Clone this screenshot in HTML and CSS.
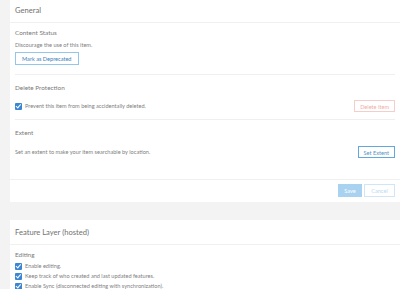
FILE: index.html
```html
<!DOCTYPE html>
<html>
  <head>
    <title>Item Settings</title>
    <link rel="stylesheet" href="styles.css">
  </head>

  <body>
    <div class="page">
      <div class="card">
        <div class="card-header">General</div>

        <div class="section status">
          <div class="section-title">Content Status</div>
          <div class="section-text">Discourage the use of this item.</div>
          <button class="btn btn-blue">Mark as Deprecated</button>
        </div>

        <div class="section protect">
          <div class="section-title">Delete Protection</div>
          <div class="row">
            <label class="check">
              <span class="box"></span>
              <span>Prevent this item from being accidentally deleted.</span>
            </label>
            <button class="btn btn-red">Delete Item</button>
          </div>
        </div>

        <div class="section extent">
          <div class="section-title">Extent</div>
          <div class="row">
            <span class="section-text">Set an extent to make your item searchable by location.</span>
            <button class="btn btn-dark-blue">Set Extent</button>
          </div>
        </div>

        <div class="card-footer">
          <button class="btn btn-save">Save</button>
          <button class="btn btn-cancel">Cancel</button>
        </div>
      </div>

      <div class="card layer">
        <div class="card-header">Feature Layer (hosted)</div>

        <div class="section editing">
          <div class="section-title">Editing</div>
          <label class="check"><span class="box"></span><span>Enable editing.</span></label>
          <label class="check"><span class="box"></span><span>Keep track of who created and last updated features.</span></label>
          <label class="check"><span class="box"></span><span>Enable Sync (disconnected editing with synchronization).</span></label>
        </div>
      </div>
    </div>
  </body>
</html>
```

FILE: styles.css
```css
* {
  box-sizing: border-box;
  margin: 0;
  padding: 0;
}

body {
  background: #f3f3f3;
  font-family: "Lato", "Open Sans", sans-serif;
  color: #808080;
  overflow: hidden;
}

.page {
  padding-left: 10px;
}

.card {
  background: #fff;
}

.card.layer {
  margin-top: 18px;
}

.card-header {
  height: 23px;
  line-height: 20px;
  padding-left: 5px;
  font-size: 7.6px;
  color: #717171;
  border-bottom: 1px solid #f0f0f0;
}

.layer .card-header {
  height: 25px;
  line-height: 24px;
}

.section {
  margin: 0 5px;
  border-bottom: 1px solid #efefef;
}

.section-title {
  font-size: 6.4px;
  line-height: 8px;
  color: #7a7a7a;
}

.section-text {
  font-size: 5.6px;
  line-height: 8px;
}

.row {
  display: flex;
  justify-content: space-between;
  align-items: center;
  height: 12px;
}

.status {
  padding: 6px 0 9px;
}

.status .section-text {
  margin-top: 4px;
}

.status .btn {
  display: block;
  margin-top: 3px;
}

.protect {
  padding: 9px 0 7px;
}

.protect .row {
  margin-top: 8px;
}

.extent {
  padding: 9px 0 21px;
  border-bottom: none;
}

.extent .row {
  margin-top: 9px;
}

.check {
  display: flex;
  align-items: center;
  gap: 3px;
  font-size: 5.6px;
  line-height: 10px;
}

.box {
  width: 7px;
  height: 7px;
  border-radius: 1px;
  background: #3a86d4;
  position: relative;
}

.box::after {
  content: "";
  position: absolute;
  left: 2px;
  top: 0.6px;
  width: 1.6px;
  height: 3.6px;
  border: solid #fff;
  border-width: 0 1.2px 1.2px 0;
  transform: rotate(40deg);
}

.btn {
  font-family: inherit;
  font-size: 5.6px;
  background: #fff;
  border: 1px solid;
  cursor: pointer;
  height: 12px;
  padding: 0 5px;
}

.btn-blue {
  height: 13px;
  padding: 0 6px;
  color: #3a82bb;
  border-color: #92c6ea;
}

.btn-red {
  color: #eeaea8;
  border-color: #f5cdc9;
}

.btn-dark-blue {
  color: #5592c6;
  border-color: #62a8dc;
}

.card-footer {
  display: flex;
  justify-content: flex-end;
  gap: 2px;
  padding: 4px 5px 5px;
  border-top: 1px solid #f0f0f0;
}

.btn-save {
  height: 13px;
  width: 24px;
  padding: 0;
  color: #fff;
  background: #a8d2ef;
  border-color: #a8d2ef;
}

.btn-cancel {
  height: 13px;
  width: 31px;
  padding: 0;
  color: #bcdaf0;
  border-color: #d0e6f6;
}

.editing {
  border-bottom: none;
  padding-top: 6px;
  padding-bottom: 6px;
}

.editing .section-title {
  margin-bottom: 2px;
}
```
